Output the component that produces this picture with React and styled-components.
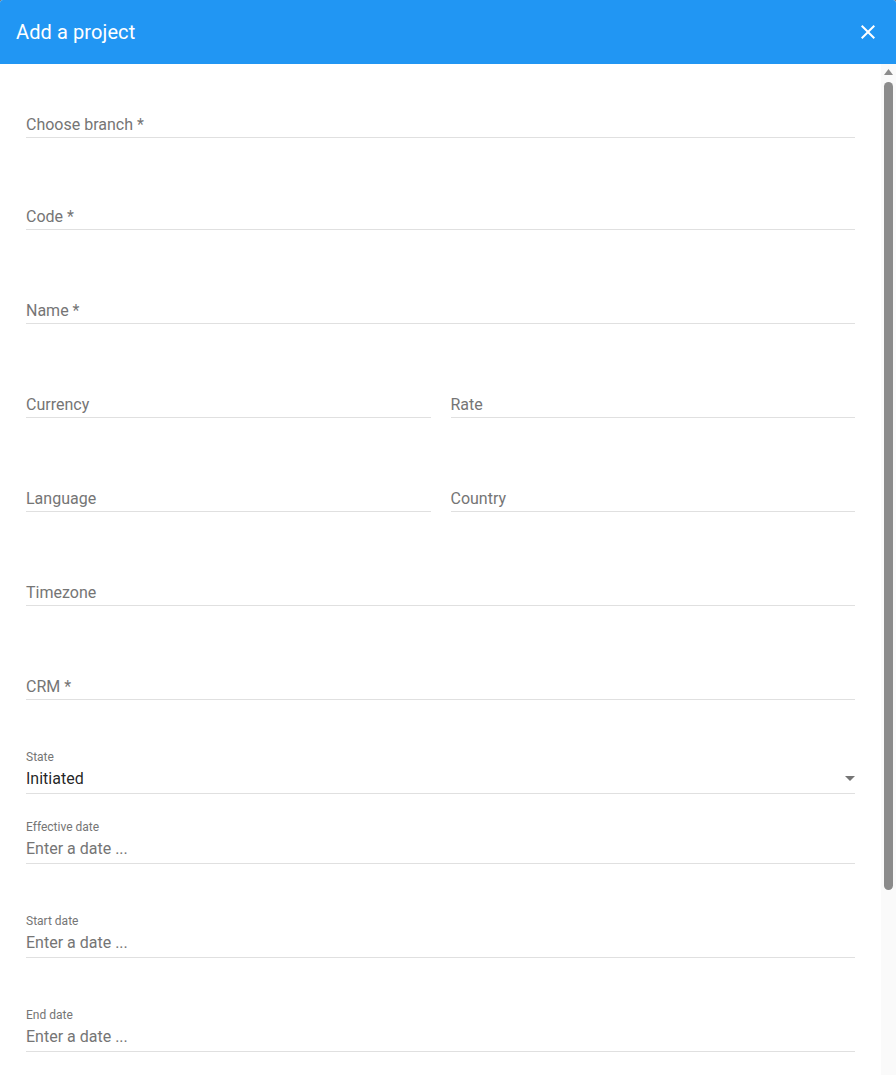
import React from 'react';
import styled, { createGlobalStyle } from 'styled-components';

const GlobalStyle = createGlobalStyle`
  html, body {
    margin: 0;
    padding: 0;
    height: 100%;
    overflow: hidden;
    background: #6e6e6e;
    font-family: Roboto, "Liberation Sans", Arial, sans-serif;
  }
  #root { height: 100%; }
`;

const Dialog = styled.div`
  height: 100vh;
  display: flex;
  flex-direction: column;
  background: #fff;
  border-radius: 3px 3px 0 0;
  overflow: hidden;
`;

const Header = styled.div`
  height: 64px;
  flex: 0 0 64px;
  background: #2196f3;
  display: flex;
  align-items: center;
  justify-content: space-between;
  padding: 0 16px;
  color: #fff;
`;

const Title = styled.h2`
  margin: 0;
  font-size: 20px;
  font-weight: 400;
  letter-spacing: 0.1px;
`;

const CloseButton = styled.button`
  border: 0;
  background: none;
  padding: 0;
  width: 24px;
  height: 24px;
  color: #fff;
  cursor: pointer;
  display: flex;
`;

const Body = styled.div`
  flex: 1;
  min-height: 0;
  display: flex;
`;

const Content = styled.div`
  flex: 1;
  overflow: hidden;
  padding: 27px 26px 50px;
`;

const ScrollTrack = styled.div`
  width: 15px;
  flex: 0 0 15px;
  background: #fafafa;
  display: flex;
  flex-direction: column;
  align-items: center;
`;

const ScrollArrow = styled.div`
  height: 16px;
  display: flex;
  align-items: center;
  justify-content: center;
`;

const Thumb = styled.div`
  margin-top: 2px;
  width: 9px;
  height: 808px;
  border-radius: 5px;
  background: #8b8b8b;
`;

const Row = styled.div`
  display: grid;
  grid-template-columns: 1fr 1fr;
  column-gap: 20px;
  margin-bottom: ${(p) => p.$space ?? 47}px;
`;

const Field = styled.div`
  display: flex;
  flex-direction: column;
  height: 47px;
  box-sizing: border-box;
  border-bottom: 1px solid #e0e0e0;
  margin-bottom: ${(p) => p.$space ?? 47}px;
`;

const SmallLabel = styled.label`
  height: 16px;
  box-sizing: border-box;
  padding-top: 4px;
  font-size: 12px;
  line-height: 12px;
  color: #757575;
`;

const Value = styled.div`
  height: 30px;
  box-sizing: border-box;
  padding-top: ${(p) => (p.$floating ? 5 : 0)}px;
  display: flex;
  align-items: center;
  justify-content: space-between;
  font-size: 16px;
  line-height: 19px;
  color: ${(p) => (p.$filled ? 'rgba(0,0,0,0.87)' : '#757575')};
`;

const CloseIcon = () => (
  <svg width="24" height="24" viewBox="0 0 24 24" fill="currentColor">
    <path d="M19 6.41L17.59 5 12 10.59 6.41 5 5 6.41 10.59 12 5 17.59 6.41 19 12 13.41 17.59 19 19 17.59 13.41 12z" />
  </svg>
);

const DropIcon = () => (
  <svg width="10" height="5" viewBox="0 0 10 5" fill="#757575">
    <path d="M0 0l5 5 5-5z" />
  </svg>
);

const UpIcon = () => (
  <svg width="9" height="6" viewBox="0 0 9 6" fill="#8b8b8b">
    <path d="M0 6L4.5 0 9 6z" />
  </svg>
);

const Plain = ({ label, required, space }) => (
  <Field $space={space}>
    <SmallLabel />
    <Value $floating>
      <span>
        {label}
        {required && ' *'}
      </span>
    </Value>
  </Field>
);

const DateField = ({ label, space }) => (
  <Field $space={space}>
    <SmallLabel>{label}</SmallLabel>
    <Value>Enter a date ...</Value>
  </Field>
);

const App = () => {
  return (
    <>
      <GlobalStyle />
      <Dialog>
        <Header>
          <Title>Add a project</Title>
          <CloseButton aria-label="close">
            <CloseIcon />
          </CloseButton>
        </Header>
        <Body>
          <Content>
            <Plain label="Choose branch" required space={45} />
            <Plain label="Code" required />
            <Plain label="Name" required />
            <Row>
              <Plain label="Currency" space={0} />
              <Plain label="Rate" space={0} />
            </Row>
            <Row>
              <Plain label="Language" space={0} />
              <Plain label="Country" space={0} />
            </Row>
            <Plain label="Timezone" />
            <Plain label="CRM" required />
            <Field $space={23}>
              <SmallLabel>State</SmallLabel>
              <Value $filled>
                <span>Initiated</span>
                <DropIcon />
              </Value>
            </Field>
            <DateField label="Effective date" />
            <DateField label="Start date" />
            <DateField label="End date" />
          </Content>
          <ScrollTrack>
            <ScrollArrow>
              <UpIcon />
            </ScrollArrow>
            <Thumb />
          </ScrollTrack>
        </Body>
      </Dialog>
    </>
  );
};

export default App;
